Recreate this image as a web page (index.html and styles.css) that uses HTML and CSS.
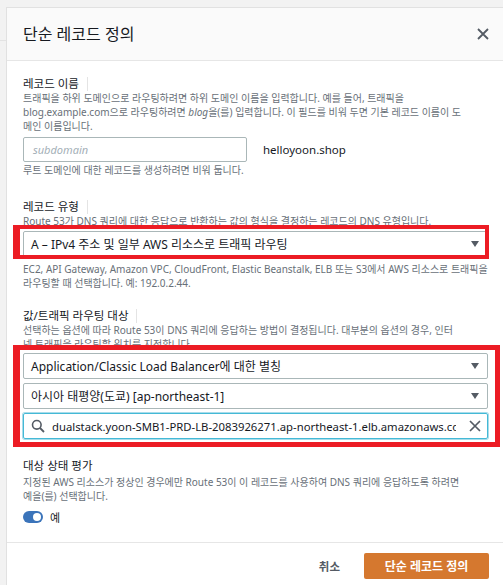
FILE: index.html
```html
<!DOCTYPE html>
<html lang="ko">
<head>
<meta charset="utf-8">
<title>단순 레코드 정의</title>
<link rel="stylesheet" href="styles.css">
</head>
<body>
<div class="modal">
  <header class="modal-header">
    <h2 class="title">단순 레코드 정의</h2>
    <button class="close" aria-label="닫기">
      <svg width="12" height="12" viewBox="0 0 12 12"><path d="M1 1L11 11M11 1L1 11" stroke="#545b64" stroke-width="1.8" fill="none"/></svg>
    </button>
  </header>
  <div class="modal-body">
    <section class="field field-name">
      <div class="label">레코드 이름<span class="info-sep"></span></div>
      <p class="desc">트래픽을 하위 도메인으로 라우팅하려면 하위 도메인 이름을 입력합니다. 예를 들어, 트래픽을<br>blog.example.com으로 라우팅하려면 <i>blog</i>을(를) 입력합니다. 이 필드를 비워 두면 기본 레코드 이름이 도<br>메인 이름입니다.</p>
      <div class="name-row">
        <div class="text-input placeholder">subdomain</div>
        <span class="domain">helloyoon.shop</span>
      </div>
      <p class="hint">루트 도메인에 대한 레코드를 생성하려면 비워 둡니다.</p>
    </section>

    <section class="field">
      <div class="label">레코드 유형<span class="info-sep"></span></div>
      <p class="desc">Route 53가 DNS 쿼리에 대한 응답으로 반환하는 값의 형식을 결정하는 레코드의 DNS 유형입니다.</p>
      <div class="highlight hl-type">
        <div class="select">A – IPv4 주소 및 일부 AWS 리소스로 트래픽 라우팅<span class="caret"></span></div>
      </div>
      <p class="desc after">EC2, API Gateway, Amazon VPC, CloudFront, Elastic Beanstalk, ELB 또는 S3에서 AWS 리소스로 트래픽을<br>라우팅할 때 선택합니다. 예: 192.0.2.44.</p>
    </section>

    <section class="field">
      <div class="label">값/트래픽 라우팅 대상<span class="info-sep"></span></div>
      <p class="desc">선택하는 옵션에 따라 Route 53이 DNS 쿼리에 응답하는 방법이 결정됩니다. 대부분의 옵션의 경우, 인터<br>넷 트래픽을 라우팅할 위치를 지정합니다.</p>
      <div class="highlight hl-target">
        <div class="select">Application/Classic Load Balancer에 대한 별칭<span class="caret"></span></div>
        <div class="select">아시아 태평양(도쿄) [ap-northeast-1]<span class="caret"></span></div>
        <div class="search">
          <svg class="search-icon" width="14" height="14" viewBox="0 0 14 14"><circle cx="5.8" cy="5.8" r="4.3" stroke="#545b64" stroke-width="1.6" fill="none"/><path d="M9 9L13 13" stroke="#545b64" stroke-width="1.8"/></svg>
          <span class="search-text">dualstack.yoon-SMB1-PRD-LB-2083926271.ap-northeast-1.elb.amazonaws.com</span>
          <svg class="clear-icon" width="12" height="12" viewBox="0 0 12 12"><path d="M1 1L11 11M11 1L1 11" stroke="#545b64" stroke-width="1.7" fill="none"/></svg>
        </div>
      </div>
    </section>

    <section class="field field-health">
      <div class="label">대상 상태 평가</div>
      <p class="desc">지정된 AWS 리소스가 정상인 경우에만 Route 53이 이 레코드를 사용하여 DNS 쿼리에 응답하도록 하려면<br>예을(를) 선택합니다.</p>
      <div class="toggle-row">
        <span class="toggle"><span class="knob"></span></span>
        <span class="toggle-label">예</span>
      </div>
    </section>
  </div>
  <footer class="modal-footer">
    <button class="btn-link">취소</button>
    <button class="btn-primary">단순 레코드 정의</button>
  </footer>
</div>
</body>
</html>
```
FILE: styles.css
```css
* { box-sizing: border-box; }
html, body { margin: 0; padding: 0; }
body {
  width: 503px;
  height: 585px;
  overflow: hidden;
  background: linear-gradient(#e3e3e3, #e3e3e3) 0 40px / 6px 1px no-repeat, #f2f2f2;
  font-family: "Noto Sans", "Noto Sans CJK KR", sans-serif;
  color: #16191f;
}
.modal {
  margin: 7px 0 0 6px;
  width: 520px;
  min-height: 600px;
  background: #fff;
  border-top: 1px solid #e1e1e1;
  border-left: 1px solid #e1e1e1;
}
.modal-header {
  height: 53px;
  background: #fafafa;
  border-bottom: 1px solid #e6e6e6;
  display: flex;
  align-items: center;
  padding: 0 0 0 16px;
  width: 497px;
}
.title {
  margin: 0;
  font-size: 16px;
  font-weight: 400;
  line-height: 20px;
  flex: 1;
}
.close {
  border: 0;
  background: none;
  padding: 0;
  width: 12px;
  height: 12px;
  margin-right: 15px;
  display: flex;
}
.modal-body {
  padding: 14px 16px 18px;
  width: 497px;
}
.field + .field { margin-top: 17px; }
.field-name { padding-bottom: 4px; }
.field + .field-health { margin-top: 18px; }
.label {
  font-size: 11.5px;
  line-height: 17px;
  display: flex;
  align-items: center;
}
.info-sep {
  display: inline-block;
  width: 1px;
  height: 14px;
  background: #e4e4e4;
  margin-left: 8px;
}
.desc {
  margin: -1px 0 0;
  font-size: 10px;
  line-height: 14px;
  color: #687078;
}
.field-health .desc { margin-top: 1px; }
.desc.after { margin-top: 5px; }
.name-row {
  display: flex;
  align-items: center;
  margin-top: 4px;
}
.text-input {
  width: 224px;
  height: 25px;
  border: 1px solid #aab7b8;
  border-radius: 2px;
  padding: 0 9px;
  display: flex;
  align-items: center;
  font-size: 11px;
}
.placeholder { color: #a4afb7; font-style: italic; }
.domain {
  margin-left: 16px;
  font-size: 11.5px;
}
.hint {
  margin: 1px 0 0;
  font-size: 10px;
  line-height: 14px;
  color: #687078;
}
.highlight {
  position: relative;
  display: flex;
  flex-direction: column;
  gap: 4px;
}
.highlight::after {
  content: "";
  position: absolute;
  border: 4px solid #ec1c24;
  border-left-width: 7px;
  pointer-events: none;
}
.hl-type { margin-top: 3px; }
.hl-type::after { top: -6px; bottom: -2px; left: -10px; right: -1px; }
.hl-target { margin-top: 2px; }
.hl-target::after { top: -8px; bottom: -8px; left: -10px; right: -12px; border-width: 5px 5px 5px 7px; }
.select {
  height: 26px;
  border: 1px solid #aab7b8;
  border-radius: 2px;
  padding: 0 8px 0 7px;
  display: flex;
  align-items: center;
  font-size: 12px;
  position: relative;
}
.caret {
  margin-left: auto;
  width: 0;
  height: 0;
  border-left: 4.5px solid transparent;
  border-right: 4.5px solid transparent;
  border-top: 6px solid #545b64;
}
.search {
  height: 26px;
  border: 1px solid #44b9d6;
  border-radius: 2px;
  display: flex;
  align-items: center;
  padding: 0 6px 0 7px;
  gap: 7px;
  box-shadow: 0 0 0 1px #a9dcea;
}
.search-icon { flex: none; }
.search-text {
  font-size: 11.3px;
  white-space: nowrap;
  overflow: hidden;
  flex: 1;
}
.clear-icon { flex: none; margin-left: 6px; }
.toggle-row {
  display: flex;
  align-items: center;
  gap: 7px;
  margin-top: 7px;
  height: 14px;
}
.toggle {
  width: 20px;
  height: 12px;
  border-radius: 6px;
  background: #3b74ba;
  display: flex;
  align-items: center;
  justify-content: flex-end;
  padding-right: 2px;
}
.knob {
  width: 8px;
  height: 8px;
  border-radius: 50%;
  background: #fff;
}
.toggle-label { font-size: 11px; }
.modal-footer {
  border-top: 1px solid #e6e6e6;
  width: 497px;
  padding: 10px 15px 0 16px;
  display: flex;
  justify-content: flex-end;
  align-items: center;
  gap: 24px;
}
.btn-link {
  border: 0;
  background: none;
  font-family: inherit;
  font-size: 11.5px;
  font-weight: 700;
  color: #545b64;
  padding: 0;
}
.btn-primary {
  height: 26px;
  width: 125px;
  border: 0;
  border-radius: 2px;
  background: #d5782f;
  color: #fff;
  font-family: inherit;
  font-size: 12px;
  font-weight: 700;
}
```
